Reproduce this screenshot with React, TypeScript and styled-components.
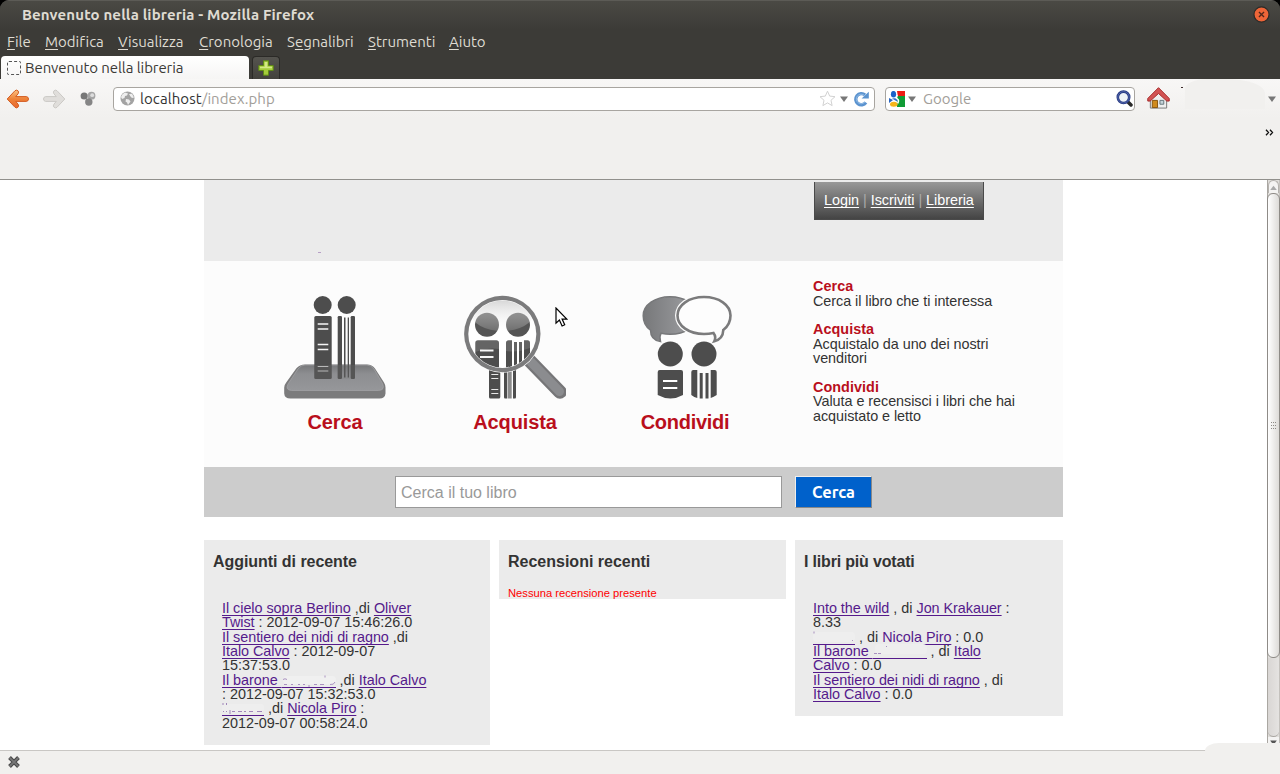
import React from "react";
import styled, { createGlobalStyle } from "styled-components";

const uiFont = `Ubuntu, "Noto Sans", "Open Sans", sans-serif`;
const pageFont = `"Liberation Sans", Arial, sans-serif`;

const Global = createGlobalStyle`
  * { box-sizing: border-box; }
  body { margin: 0; background: #000; overflow: hidden; }
  svg { display: block; flex: none; }
`;

const Window = styled.div`
  position: relative;
  display: flex;
  flex-direction: column;
  width: 1280px;
  height: 774px;
  overflow: hidden;
  border-radius: 9px 9px 0 0;
  background: #3c3b37;
  font-family: ${uiFont};
`;

const TitleBar = styled.header`
  display: flex;
  align-items: center;
  justify-content: space-between;
  height: 30px;
  padding: 0 10px 2px 22px;
  border-top: 1px solid #5c5b56;
  background: linear-gradient(#4a4944, #3c3b37);
  color: #dfdbd2;
  font-size: 15px;
  font-weight: 700;
  letter-spacing: 0.14px;
  white-space: nowrap;
`;

const MenuBar = styled.nav`
  display: flex;
  height: 25px;
  padding-left: 7px;
  color: #dfdbd2;
  font-size: 15px;
  line-height: 24px;
`;

const MenuItem = styled.span<{ $w: number }>`
  width: ${(p) => p.$w}px;
  white-space: nowrap;
  font-variant-ligatures: none;
  u {
    text-underline-offset: 2px;
    text-decoration-thickness: 1px;
  }
`;

const TabStrip = styled.div`
  display: flex;
  height: 24px;
  padding: 1px 0 0 1px;
  gap: 3px;
`;

const Tab = styled.div`
  display: flex;
  align-items: center;
  width: 248px;
  gap: 4px;
  padding: 0 6px;
  border-radius: 4px 4px 0 0;
  background: linear-gradient(#fff, #f6f5f4);
  color: #3c3b37;
  font-size: 15px;
  letter-spacing: -0.08px;
  white-space: nowrap;
`;

const Favicon = styled.i`
  width: 14px;
  height: 14px;
  border: 1px dashed #555;
  border-radius: 2px;
`;

const NewTab = styled.div`
  display: flex;
  align-items: center;
  justify-content: center;
  width: 28px;
  border: 1px solid #2b2a27;
  border-bottom: 0;
  border-radius: 4px 4px 0 0;
  background: linear-gradient(#55544f, #42413c);
`;

const NavBar = styled.div`
  display: flex;
  align-items: center;
  height: 39px;
  background: linear-gradient(#f8f7f6, #f1f0ee);
`;

const Buttons = styled.div`
  display: flex;
  align-items: center;
  width: 113px;
  height: 36px;
  padding-left: 6px;
  gap: 14px;
`;

const Field = styled.div<{ $w: number; $pl?: number; $pr?: number }>`
  display: flex;
  align-items: center;
  width: ${(p) => p.$w}px;
  height: 24px;
  padding: 0 ${(p) => p.$pr ?? 4}px 0 ${(p) => p.$pl ?? 6}px;
  border: 1px solid #a8a5a0;
  border-radius: 4px;
  background: #fff;
  color: #a29e99;
  font-size: 15px;
  white-space: nowrap;
`;

const FieldText = styled.span<{ $ml: number; $ls?: number }>`
  flex: 1;
  margin-left: ${(p) => p.$ml}px;
  letter-spacing: ${(p) => p.$ls ?? 0}px;
  b {
    color: #333;
    font-weight: 400;
  }
`;

const Spacer = styled.span<{ $w?: number }>`
  flex: ${(p) => (p.$w ? "none" : 1)};
  width: ${(p) => p.$w ?? 0}px;
`;

const BookmarksBar = styled.div`
  display: flex;
  justify-content: flex-end;
  height: 62px;
  padding: 11px 6px 0 0;
  border-bottom: 1px solid #91908c;
  background: #f1f0ee;
`;

const Viewport = styled.div`
  display: flex;
  height: 570px;
  background: #fff;
`;

const Page = styled.main`
  flex: 1;
  padding-left: 204px;
  overflow: hidden;
  color: #333;
  font-family: ${pageFont};
  font-size: 14.4px;
  line-height: 14.4px;
  white-space: nowrap;
`;

const Scrollbar = styled.aside`
  display: flex;
  flex-direction: column;
  width: 13px;
  border-left: 1px solid #aaa7a2;
  border-right: 1px solid #c4c1bd;
  background: #e0dedb;
`;

const ScrollButton = styled.div`
  display: flex;
  align-items: center;
  justify-content: center;
  height: 13px;
  border: 1px solid #b5b2ae;
  border-bottom: 0;
  border-radius: 6px 6px 0 0;
  background: #f4f3f2;
`;

const DownButton = styled.div`
  display: flex;
  justify-content: center;
  height: 13px;
  padding-top: 3px;
  background: #f4f3f2;
`;

const Thumb = styled.div`
  display: flex;
  align-items: center;
  justify-content: center;
  height: 465px;
  margin: 0 -1px;
  border: 1px solid #8e8b87;
  border-radius: 6px;
  background: linear-gradient(90deg, #fff, #dddbd8);
`;

const TrackEnd = styled.div`
  height: 79px;
  border-bottom: 1px solid #aaa7a2;
  border-radius: 0 0 6px 6px;
  background: linear-gradient(90deg, #d9d6d4, #e5e3e1);
`;

const StatusBar = styled.footer`
  display: flex;
  align-items: center;
  height: 24px;
  padding: 0 0 1px 7px;
  border-top: 1px solid #c9c7c4;
  background: #f1f0ee;
`;

const StatusBump = styled.div`
  position: absolute;
  right: 0;
  bottom: 0;
  width: 75px;
  height: 31px;
  border-top-left-radius: 14px 8px;
  background: #f1f0ee;
`;

const Header = styled.div`
  display: flex;
  width: 859px;
  height: 81px;
  padding: 2px 79px 0 114px;
  justify-content: space-between;
  background: #ebebeb;
`;

const HeaderMark = styled.i`
  width: 3px;
  height: 1px;
  margin-top: 70px;
  background: #b79fc6;
`;

const UserBar = styled.div`
  width: 170px;
  height: 38px;
  padding: 11px 0 0 9px;
  border: 1px solid #4a4a4a;
  border-top: 0;
  background: linear-gradient(#989898, #444);
  color: #aaa;
  letter-spacing: -0.03px;
`;

const UserLink = styled.a`
  color: #fff;
  text-decoration: underline;
  text-decoration-thickness: 1px;
  text-underline-offset: 2px;
  text-decoration-skip-ink: none;
`;

const Hero = styled.section`
  display: flex;
  width: 859px;
  height: 206px;
  padding-left: 41px;
  background: #fcfcfc;
`;

const Feature = styled.div<{ $w: number }>`
  display: flex;
  flex-direction: column;
  align-items: center;
  width: ${(p) => p.$w}px;
  padding-top: 34px;
`;

const FeatureName = styled.strong<{ $ls?: number; $shift?: number }>`
  margin-top: 10px;
  margin-right: ${(p) => p.$shift ?? 0}px;
  color: #b90f1c;
  font-size: 20px;
  line-height: 24px;
  letter-spacing: ${(p) => p.$ls ?? -0.1}px;
`;

const Info = styled.div`
  margin-left: auto;
  width: 250px;
  padding-top: 18.2px;
  letter-spacing: -0.05px;
`;

const InfoItem = styled.p`
  margin: 0 0 14.4px;
  strong {
    display: block;
    color: #b90f1c;
    letter-spacing: 0.05px;
  }
`;

const SearchBand = styled.form`
  display: flex;
  width: 859px;
  height: 50px;
  padding: 9px 0 0 191px;
  gap: 13px;
  background: #ccc;
`;

const SearchInput = styled.input`
  width: 387px;
  height: 32px;
  padding: 1px 5px 0;
  border: 1px solid #999;
  background: #fff;
  font-family: ${pageFont};
  font-size: 16px;
  &::placeholder {
    color: #999;
  }
`;

const SearchButton = styled.button`
  width: 77px;
  height: 32px;
  padding: 0 0 1px;
  border: 1px solid;
  border-color: #eee #888 #888 #eee;
  background: #0061cb;
  color: #fff;
  font-family: ${uiFont};
  font-size: 16.4px;
  font-weight: 700;
`;

const Columns = styled.div`
  display: flex;
  align-items: flex-start;
  gap: 9px;
  margin-top: 23px;
`;

const Panel = styled.section<{ $w: number; $h: number }>`
  width: ${(p) => p.$w}px;
  height: ${(p) => p.$h}px;
  padding: 12px 0 0 9px;
  background: #ebebeb;
`;

const PanelTitle = styled.h3<{ $ls?: number }>`
  margin: 0;
  font-size: 16px;
  line-height: 19px;
  letter-spacing: ${(p) => p.$ls ?? 0}px;
`;

const Listing = styled.div`
  margin: 29.75px 0 0 9px;
`;

const Row = styled.div`
  height: 14.4px;
`;

const BookLink = styled.a`
  color: #551a8b;
  letter-spacing: -0.04px;
  text-decoration: underline;
  text-decoration-thickness: 1px;
  text-underline-offset: 2px;
  text-decoration-skip-ink: none;
`;

const Notice = styled.p`
  margin: 15px 0 0;
  color: #f00;
  font-size: 11.2px;
  line-height: 14px;
`;

const Faded = styled.a<{ $w: number }>`
  display: inline-block;
  width: ${(p) => p.$w}px;
  height: 15px;
  border-bottom: 1px solid #551a8b;
  vertical-align: -3px;
  svg {
    width: 100%;
    height: 14px;
  }
`;

const Pointer = styled.div`
  position: absolute;
  left: 555px;
  top: 307px;
`;

const Patch = styled.div`
  position: absolute;
  left: 1185px;
  top: 79px;
  width: 80px;
  height: 30px;
  border-radius: 22px 40px 0 0 / 10px 14px 0 0;
  background: #f1f0ee;
`;

const Speck = styled.i`
  width: 2px;
  height: 1px;
  margin: -23px 0 0 11px;
  background: #3b2a2a;
`;

const Caret = ({ w = 8, up = false, color = "#777" }) => (
  <svg width={w} height={w - 2} viewBox="0 0 8 6">
    <path d={up ? "M0 6h8L4 1z" : "M0 .5h8L4 6z"} fill={color} />
  </svg>
);

const CloseIcon = () => (
  <svg width="17" height="17" viewBox="0 0 18 18">
    <circle cx="9" cy="9" r="8" fill="#ee6538" stroke="#2d2b28" strokeWidth="1.3" />
    <path d="M6.3 6.3l5.4 5.4M11.7 6.3l-5.4 5.4" stroke="#51271a" strokeWidth="1.4" />
  </svg>
);

const PlusIcon = () => (
  <svg width="16" height="16" viewBox="0 0 16 16">
    <path d="M5.5.8h5v4.7h4.7v5h-4.7v4.7h-5v-4.7H.8v-5h4.7z" fill="#a5cd3b" stroke="#5f8a17" />
    <path d="M6.7 2h2.6v4.7H14v1.6H2V6.7h4.7z" fill="#d4e986" />
  </svg>
);

const Arrow = ({ forward = false }) => (
  <svg width="23" height="20" viewBox="0 0 23 20">
    <defs>
      <linearGradient id="orange" x2="0" y2="1">
        <stop stopColor="#fbc183" />
        <stop offset=".5" stopColor="#ee8238" />
        <stop offset="1" stopColor="#e9682f" />
      </linearGradient>
    </defs>
    <path
      d="M1.200 10 9 1.700q1.600-1.200 2.900 0t.2 3.100L9.700 7.600H20.300q2.200.2 2.200 2.400t-2.200 2.400H9.700l2.400 2.800q1.200 1.900-.2 3.100t-2.900 0z"
      transform={forward ? "translate(23 0) scale(-1 1)" : undefined}
      fill={forward ? "#e0dedb" : "url(#orange)"}
      stroke={forward ? "#cbc9c5" : "#d35c22"}
      strokeLinejoin="round"
    />
  </svg>
);

const BallsIcon = () => (
  <svg width="16" height="16" viewBox="0 0 16 16">
    <circle cx="4.200" cy="5" r="3.600" fill="#777" />
    <circle cx="11.500" cy="4.700" r="3.900" fill="#a5a5a5" />
    <circle cx="12.200" cy="4.200" r="1.900" fill="#ddd" />
    <circle cx="8.800" cy="11" r="3.700" fill="#858585" />
  </svg>
);

const GlobeIcon = () => (
  <svg width="15" height="15" viewBox="0 0 15 15">
    <circle cx="7.500" cy="7.500" r="7" fill="#a3a3a3" />
    <path d="M1 6q1-3.500 4-4.500l3 1-1 2-2 .5-.5 2-2.500 1zM9 3l3-.2 2 3.700-2 .5-1.500-1.500zM6 8l3 .5 1.500 2-2.500 3.500-1-2.500-1.500-1z" fill="#eee" />
  </svg>
);

const StarIcon = () => (
  <svg width="17" height="17" viewBox="0 0 17 17">
    <path d="m8.500 1.200 2.200 4.900 5.300.6-4 3.600 1.100 5.300-4.600-2.700-4.600 2.700L5 10.300 1 6.700l5.300-.6z" fill="#fff" stroke="#d2d2d2" />
  </svg>
);

const ReloadIcon = () => (
  <svg width="17" height="16" viewBox="0 0 17 16">
    <path d="M12.900 11.500A5.600 5.600 0 1 1 12 4" fill="none" stroke="#5b93cf" strokeWidth="3.400" />
    <path d="M15.800.8v6.700H8.600z" fill="#5b93cf" />
    <path d="M12 10.800a4.800 4.800 0 1 1-.5-6.200" fill="none" stroke="#9cc3ea" strokeWidth=".8" />
  </svg>
);

const GoogleIcon = () => (
  <svg width="16" height="16" viewBox="0 0 16 16">
    <path d="M8 0h8v6H9z" fill="#ee1b14" />
    <path d="M8 5h8v11H8z" fill="#109b35" />
    <path d="M0 7l4 2-4 3z" fill="#2764c2" />
    <ellipse cx="4.500" cy="3.200" rx="2.600" ry="3.300" fill="#1b61c9" />
    <path d="M3 7.500q4-1 5 1t0 2z" fill="#2d6bc8" />
    <path d="M8.500 4.500q-2 2 0 3.500t0 4.500" fill="none" stroke="#fff" strokeWidth="1.500" />
    <ellipse cx="4.800" cy="13.300" rx="3.800" ry="2.500" fill="#f5b51a" />
  </svg>
);

const LensIcon = () => (
  <svg width="17" height="17" viewBox="0 0 17 17">
    <path d="m11.500 11.500 3.500 3.500" stroke="#292929" strokeWidth="3.500" strokeLinecap="round" />
    <circle cx="7.500" cy="7.300" r="5.700" fill="#eef2f7" stroke="#273a82" strokeWidth="2.600" />
    <circle cx="7.500" cy="7.300" r="5.700" fill="none" stroke="#6b80c4" strokeWidth=".6" />
  </svg>
);

const HomeSlot = styled.div`
  height: 26px;
`;

const HomeIcon = () => (
  <HomeSlot>
    <svg width="23" height="24" viewBox="0 0 24 24">
      <path d="M3.500 11.500 12 4l8.500 7.500V22.500h-17z" fill="#eee" stroke="#777" />
      <path d="M5.500 14.500h5.500v7.500H5.500z" fill="#cf8a1d" stroke="#85530d" />
      <path d="M13.500 14.500h4v4h-4z" fill="#c4d3d9" stroke="#66777c" />
      <path d="M.8 12.500 12 1.200l11.200 11.300v2.700h-2.500L12 7.300l-8.700 7.900H.8z" fill="#d25353" stroke="#a52828" strokeLinejoin="round" />
    </svg>
  </HomeSlot>
);

const MoreIcon = () => (
  <svg width="9" height="7" viewBox="0 0 9 7">
    <path d="M1 .8 3.500 3.500 1 6.200M5 .8l2.500 2.700L5 6.200" fill="none" stroke="#111" strokeWidth="1.300" />
  </svg>
);

const StopIcon = () => (
  <svg width="14" height="14" viewBox="0 0 14 14">
    <path d="m2.500 2.500 9 9M11.500 2.500l-9 9" stroke="#4a4a4a" strokeWidth="3.900" />
    <path d="m2.800 2.800 8.400 8.400M11.200 2.800l-8.400 8.400" stroke="#777" strokeWidth="1.800" />
  </svg>
);

const Grip = () => (
  <svg width="5" height="7" viewBox="0 0 5 7">
    <path d="M0 .5h5M0 3.500h5M0 6.500h5" stroke="#8e8b87" strokeDasharray="1 1" />
  </svg>
);

const ShelfArt = () => (
  <svg width="102" height="105" viewBox="0 0 102 105">
    <defs>
      <linearGradient id="shelf" x2="0" y2="1">
        <stop stopColor="#77787a" />
        <stop offset=".35" stopColor="#8d8e91" />
        <stop offset="1" stopColor="#96979a" />
      </linearGradient>
    </defs>
    <path d="M21 69.500h62q5 0 8 4l9 14q1.500 2.500 1.500 5v6q-.5 5-6 5h-89q-6 0-6.300-5v-6q0-2.500 2-5l10-14q3.500-4 8.800-4z" fill="#7b7b7c" />
    <path d="M21 70h62q4 0 7 4l8.500 14.500q3 6.500-4 7H7.500q-6.500-.5-3.500-6.500L14 74q3-4 7-4z" fill="url(#shelf)" stroke="#a5a5a7" strokeWidth=".7" />
    <g fill="#4d4d4d">
      <circle cx="38.700" cy="10" r="9" />
      <circle cx="62.700" cy="10" r="9" />
      <rect x="30.300" y="21" width="17.400" height="63" rx="1.500" />
      <rect x="53.700" y="21" width="4.300" height="63" rx="1.200" />
      <rect x="60" y="22.500" width="1.500" height="60" />
      <rect x="63.700" y="22.500" width="1.300" height="60" />
      <rect x="66.700" y="21" width="4.300" height="63" rx="1.200" />
    </g>
    <path d="M30.300 70h17.400v14H30.300zM53.700 70H71v14H53.700z" fill="#77787a" opacity=".2" />
    <path d="M33.700 29h10.600M33.700 34h10.600M33.700 49.500h10.600M33.700 54.500h10.600" stroke="#f5f5f5" strokeWidth="1.300" />
    <path d="M33.700 71.500h10.600M33.700 76h10.600" stroke="#b8b8b8" strokeWidth="1.200" />
  </svg>
);

const MagnifierArt = () => (
  <svg width="102" height="105" viewBox="0 0 102 105">
    <defs>
      <clipPath id="lens">
        <circle cx="38.300" cy="39" r="33.500" />
      </clipPath>
      <linearGradient id="gloss" x2="0" y2="1">
        <stop stopColor="#bbb" stopOpacity=".7" />
        <stop offset="1" stopColor="#fff" stopOpacity=".15" />
      </linearGradient>
    </defs>
    <path d="M25 75h11.300v27q0 1.500-1.500 1.500H26.500q-1.500 0-1.500-1.500zM40 75h3.300v28.500H41q-1 0-1-1.500zM49 75h3v27q0 1.500-1 1.500h-2z" fill="#4d4d4d" />
    <path d="M44 75h3.700v28.500H44z" fill="#8a8a8a" />
    <path d="M27.300 79.500h7M27.300 83.500h7M27.300 94.500h7M27.300 98.500h7" stroke="#e8e8e8" strokeWidth="1.200" />
    <path d="M64 64 96 97" stroke="#767678" strokeWidth="13.500" strokeLinecap="round" />
    <path d="M67 67 95.500 96.500" stroke="#8b8c8f" strokeWidth="9" strokeLinecap="round" />
    <circle cx="38.300" cy="39" r="38.800" fill="#fcfcfc" />
    <circle cx="38.300" cy="39" r="38.200" fill="#7b7b7c" />
    <circle cx="38.300" cy="39" r="34" fill="#fff" />
    <g clipPath="url(#lens)">
      <circle cx="23" cy="29.700" r="12" fill="#555" />
      <circle cx="54" cy="29.700" r="12" fill="#555" />
      <path d="M11.300 48q0-2.700 2.700-2.700h18.300q2.700 0 2.700 2.700v26H11.300zM42 48q0-2.700 2.700-2.700H48v29h-6zM50 47h3v27h-3zM55 47h3v27h-3zM60 45.300h3.500q2.500 0 2.500 2.700v26h-6z" fill="#4d4d4d" />
      <path d="M16 55.500h13.500M16 62h13.500" stroke="#f6f6f6" strokeWidth="2" />
      <ellipse cx="38.300" cy="19" rx="31" ry="17" fill="url(#gloss)" />
      <path d="M11.300 45h23.700v9q-12-2-23.700 3zM42 45h24v8q-12 5-24 3z" fill="#fff" opacity=".13" />
    </g>
  </svg>
);

const BubblesArt = () => (
  <svg width="90" height="105" viewBox="0 0 90 105">
    <defs>
      <linearGradient id="bubble">
        <stop stopColor="#77787a" />
        <stop offset="1" stopColor="#a0a1a4" />
      </linearGradient>
    </defs>
    <path d="M28 1.700c15 0 27 8 27 19s-12 18.500-27 18.500q-4 0-9-1-2 4-.5 8.300Q8.500 45 8.500 35.200 1.200 30 1.200 20.700C1.200 10 13 1.700 28 1.700z" fill="url(#bubble)" stroke="#77787a" strokeWidth="1.500" />
    <path
      d="M62 1.700C47 1.700 35.500 10 35.500 20.500S47 39.300 62 39.300q5 0 9.500-1.300 3 4 .8 8.300 9.500-1.500 9.700-11.300 6.700-5.500 6.700-14.500C88.700 10 77 1.700 62 1.700z"
      fill="#fff"
      stroke="#fcfcfc"
      strokeWidth="5"
    />
    <path
      d="M62 2C47 2 35.500 10 35.500 20.500S47 39 62 39q5 0 9.500-1 3 4 .8 8.300Q81 44 81.300 35q7.200-5.500 7.200-14.500C88.500 10 77 2 62 2z"
      fill="#fdfdfd"
      stroke="#7b7b7c"
      strokeWidth="2.600"
    />
    <g fill="#4d4d4d">
      <circle cx="28.300" cy="59" r="12.500" />
      <circle cx="62" cy="59" r="12.500" />
      <path d="M15.700 77q0-2 2-2H39q2 0 2 2v23q-12.500 7-25.300 0zM49.300 77q0-2 2-2h4v28q-3-.6-6-3zM57.700 78h3v25.500h-3zM63.500 78h3v25.500h-3zM68.700 75h4q2 0 2 2v23q-3 2.200-6 3z" />
    </g>
    <path d="M21 86h14.300M21 93h14.300" stroke="#fff" strokeWidth="2" />
  </svg>
);

const PointerIcon = () => (
  <svg width="13" height="20" viewBox="0 0 13 20">
    <path d="M1 1v15.200l3.400-3.200 2.700 6 2.600-1.200-2.600-5.700h4.700z" fill="#fff" stroke="#000" strokeWidth="1.200" />
  </svg>
);

const menu: [string, string, string, number][] = [
  ["", "F", "ile", 38],
  ["", "M", "odifica", 73],
  ["", "V", "isualizza", 81],
  ["", "C", "ronologia", 88],
  ["S", "e", "gnalibri", 81],
  ["", "S", "trumenti", 81],
  ["", "A", "iuto", 50],
];

export default function App() {
  return (
    <>
      <Global />
      <Window>
        <TitleBar>
          Benvenuto nella libreria - Mozilla Firefox
          <CloseIcon />
        </TitleBar>
        <MenuBar>
          {menu.map(([pre, key, post, w]) => (
            <MenuItem key={post} $w={w}>
              {pre}
              <u>{key}</u>
              {post}
            </MenuItem>
          ))}
        </MenuBar>
        <TabStrip>
          <Tab>
            <Favicon />
            Benvenuto nella libreria
          </Tab>
          <NewTab>
            <PlusIcon />
          </NewTab>
        </TabStrip>
        <NavBar>
          <Buttons>
            <Arrow />
            <Arrow forward />
            <BallsIcon />
          </Buttons>
          <Field $w={762}>
            <GlobeIcon />
            <FieldText $ml={5} $ls={0.08}>
              <b>localhost</b>/index.php
            </FieldText>
            <StarIcon />
            <Spacer $w={4} />
            <Caret />
            <Spacer $w={5} />
            <ReloadIcon />
          </Field>
          <Spacer $w={10} />
          <Field $w={250} $pl={3} $pr={1}>
            <GoogleIcon />
            <Spacer $w={3} />
            <Caret />
            <FieldText $ml={7}>Google</FieldText>
            <LensIcon />
          </Field>
          <Spacer $w={12} />
          <HomeIcon />
          <Speck />
          <Spacer />
          <Caret />
          <Spacer $w={4} />
        </NavBar>
        <BookmarksBar>
          <MoreIcon />
        </BookmarksBar>
        <Viewport>
          <Page>
            <Header>
              <HeaderMark />
              <UserBar>
                <UserLink>Login</UserLink> | <UserLink>Iscriviti</UserLink> | <UserLink>Libreria</UserLink>
              </UserBar>
            </Header>
            <Hero>
              <Feature $w={180}>
                <ShelfArt />
                <FeatureName>Cerca</FeatureName>
              </Feature>
              <Feature $w={180}>
                <MagnifierArt />
                <FeatureName>Acquista</FeatureName>
              </Feature>
              <Feature $w={163}>
                <BubblesArt />
                <FeatureName $ls={-0.28} $shift={3}>
                  Condividi
                </FeatureName>
              </Feature>
              <Info>
                <InfoItem>
                  <strong>Cerca</strong>
                  Cerca il libro che ti interessa
                </InfoItem>
                <InfoItem>
                  <strong>Acquista</strong>
                  Acquistalo da uno dei nostri
                  <br />
                  venditori
                </InfoItem>
                <InfoItem>
                  <strong>Condividi</strong>
                  Valuta e recensisci i libri che hai
                  <br />
                  acquistato e letto
                </InfoItem>
              </Info>
            </Hero>
            <SearchBand>
              <SearchInput placeholder="Cerca il tuo libro" />
              <SearchButton type="button">Cerca</SearchButton>
            </SearchBand>
            <Columns>
              <Panel $w={286} $h={205}>
                <PanelTitle $ls={-0.05}>Aggiunti di recente</PanelTitle>
                <Listing>
                  <Row>
                    <BookLink>Il cielo sopra Berlino</BookLink> ,di <BookLink>Oliver</BookLink>
                  </Row>
                  <Row>
                    <BookLink>Twist</BookLink> : 2012-09-07 15:46:26.0
                  </Row>
                  <Row>
                    <BookLink>Il sentiero dei nidi di ragno</BookLink> ,di
                  </Row>
                  <Row>
                    <BookLink>Italo Calvo</BookLink> : 2012-09-07
                  </Row>
                  <Row>15:37:53.0</Row>
                  <Row>
                    <BookLink>Il barone </BookLink>
                    <Faded $w={54}>
                      <svg viewBox="0 0 54 14">
                        <rect x="1" y="3" width="53" height="8" rx="4" fill="#f0f0f0" />
                        <path d="M1 6.500q2-1.500 4 0M2 11.500h3M9 11.500h2M16 11.500h2M21 11.500h2M27 12v2M32 11.500h3M38 11.500h4M43 2.500v2M48 11.500q4 .5 5-2.500" fill="none" stroke="#8d6bad" opacity=".7" />
                      </svg>
                    </Faded>{" "}
                    ,di <BookLink>Italo Calvo</BookLink>
                  </Row>
                  <Row>: 2012-09-07 15:32:53.0</Row>
                  <Row>
                    <Faded $w={42}>
                      <svg viewBox="0 0 42 14">
                        <rect x="0" y="3" width="42" height="8" rx="3" fill="#eee" />
                        <path d="M1 2v2M4.500 2v2M1 10.500h1M4 10.500h1M8 9v4M10 10.500h3M16 10.500h4M22 10.500h2M27 10.500h4M35 10.500h5" fill="none" stroke="#8d6bad" opacity=".8" />
                      </svg>
                    </Faded>{" "}
                    ,di <BookLink>Nicola Piro</BookLink> :
                  </Row>
                  <Row>2012-09-07 00:58:24.0</Row>
                </Listing>
              </Panel>
              <Panel $w={287} $h={59}>
                <PanelTitle>Recensioni recenti</PanelTitle>
                <Notice>Nessuna recensione presente</Notice>
              </Panel>
              <Panel $w={268} $h={176}>
                <PanelTitle $ls={-0.18}>I libri più votati</PanelTitle>
                <Listing>
                  <Row>
                    <BookLink>Into the wild</BookLink> , di <BookLink>Jon Krakauer</BookLink> :
                  </Row>
                  <Row>8.33</Row>
                  <Row>
                    <Faded $w={42}>
                      <svg viewBox="0 0 42 14">
                        <rect x="0" y="2" width="42" height="10" rx="4" fill="#eee" />
                        <path d="M1 1.500v2M39 10.500h1" stroke="#8d6bad" opacity=".7" />
                      </svg>
                    </Faded>{" "}
                    , di <BookLink>Nicola Piro</BookLink> : 0.0
                  </Row>
                  <Row>
                    <BookLink>Il barone </BookLink>
                    <Faded $w={54}>
                      <svg viewBox="0 0 54 14">
                        <rect x="2" y="0" width="52" height="10" rx="4" fill="#eee" />
                        <path d="M1 9.500h3M5 9.500h3M13 2.500h1" stroke="#8d6bad" opacity=".7" />
                      </svg>
                    </Faded>{" "}
                    , di <BookLink>Italo</BookLink>
                  </Row>
                  <Row>
                    <BookLink>Calvo</BookLink> : 0.0
                  </Row>
                  <Row>
                    <BookLink>Il sentiero dei nidi di ragno</BookLink> , di
                  </Row>
                  <Row>
                    <BookLink>Italo Calvo</BookLink> : 0.0
                  </Row>
                </Listing>
              </Panel>
            </Columns>
          </Page>
          <Scrollbar>
            <ScrollButton>
              <Caret w={7} up color="#aaa" />
            </ScrollButton>
            <Thumb>
              <Grip />
            </Thumb>
            <TrackEnd />
            <DownButton>
              <Caret w={7} color="#555" />
            </DownButton>
          </Scrollbar>
        </Viewport>
        <StatusBar>
          <StopIcon />
        </StatusBar>
        <StatusBump />
        <Patch />
        <Pointer>
          <PointerIcon />
        </Pointer>
      </Window>
    </>
  );
}
